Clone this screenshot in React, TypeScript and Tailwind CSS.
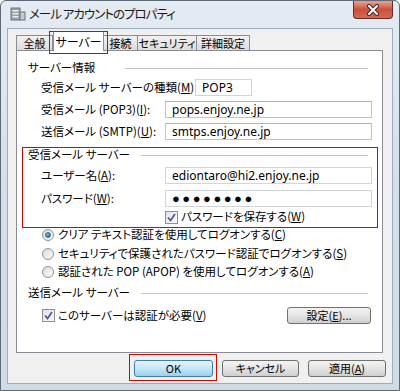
import React from "react";

const U = ({ c }: { c: string }) => <span className="underline">{c}</span>;

const Check = () => (
  <span className="relative inline-flex w-[13px] h-[13px] shrink-0 border border-[#8e8f8f] bg-gradient-to-br from-[#e3e3e3] to-[#fafafa] items-center justify-center">
    <svg width="11" height="11" viewBox="0 0 11 11">
      <path d="M2 5.5 L4.5 8.5 L9 2" fill="none" stroke="#4a5f97" strokeWidth="1.8" />
    </svg>
  </span>
);

const Radio = ({ on }: { on?: boolean }) => (
  <span className="inline-flex w-[12px] h-[12px] shrink-0 rounded-full border border-[#8e8f8f] bg-gradient-to-br from-[#dcdcdc] to-[#fbfbfb] items-center justify-center">
    {on && <span className="w-[6px] h-[6px] rounded-full bg-gradient-to-br from-[#8ad0f7] to-[#1d5b9c] border border-[#276aa3]" />}
  </span>
);

const Btn = ({ children, def, w }: { children: React.ReactNode; def?: boolean; w: string }) => (
  <div
    className={`${w} h-[17px] rounded-[3px] border flex items-center justify-center text-[11px] text-black ${
      def
        ? "border-[#3c7fb1] bg-gradient-to-b from-[#e5f4fc] via-[#c4e5f6] to-[#98d1ef]"
        : "border-[#707070] bg-gradient-to-b from-[#f4f4f4] via-[#e4e4e4] to-[#cfcfcf]"
    }`}
  >
    {children}
  </div>
);

const Heading = ({ text, w }: { text: string; w: string }) => (
  <div className="flex items-center h-[16px] pl-[11px] pr-[14px]">
    <span className={`${w} shrink-0 whitespace-nowrap`}>{text}</span>
    <div className="flex-1 border-t border-[#c5c5c5]" />
  </div>
);

const Input = ({ value, w, dim }: { value: React.ReactNode; w?: string; dim?: boolean }) => (
  <div
    className={`${w ?? "flex-1"} h-[17px] bg-white border ${
      dim ? "border-[#d0d5da]" : "border-[#b5c6d6] border-t-[#a2b3c4]"
    } flex items-center pl-[6px] font-['Noto_Sans',sans-serif] text-[12px] text-black whitespace-nowrap overflow-hidden`}
  >
    {value}
  </div>
);

const Tab = ({ label, w, sel }: { label: string; w: string; sel?: boolean }) =>
  sel ? (
    <div className={`${w} h-[20px] -mb-px relative z-10 bg-white border border-b-0 border-[#898c95] flex items-center justify-center text-[12px] whitespace-nowrap`}>
      {label}
    </div>
  ) : (
    <div className={`${w} h-[15px] bg-gradient-to-b from-[#f2f2f2] to-[#dcdcdc] border border-b-0 border-[#898c95] -ml-px first:ml-0 flex items-center justify-center text-[11px] whitespace-nowrap`}>
      {label}
    </div>
  );

export default function App() {
  return (
    <div className="w-[400px] h-[391px] relative overflow-hidden bg-gradient-to-b from-[#e4ebf2] via-[#d5dfe8] to-[#cfdae5] border border-[#5d6a78] rounded-t-[6px] font-['Noto_Sans_CJK_JP','Noto_Sans',sans-serif] [font-feature-settings:'palt'] text-black">
      {/* title bar */}
      <div className="h-[27px] flex items-start">
        <div className="ml-[9px] mt-[5px] w-[16px] h-[16px]">
          <svg width="16" height="16" viewBox="0 0 16 16">
            <rect x="1" y="2" width="9" height="12" fill="#9aa3ab" stroke="#6d757d" />
            <rect x="2.5" y="4" width="6" height="1.5" fill="#e8ecef" />
            <rect x="2.5" y="7" width="6" height="1.5" fill="#e8ecef" />
            <rect x="2.5" y="10" width="6" height="1.5" fill="#e8ecef" />
            <rect x="10" y="6" width="5" height="8" fill="#c4cbd1" stroke="#6d757d" />
          </svg>
        </div>
        <div className="ml-[3px] mt-[4px] text-[12.5px] leading-[18px] tracking-[-1px] text-[#1a1a1a]">
          メール アカウントのプロパティ
        </div>
        <div className="ml-auto mr-[6px] w-[40px] h-[18px] rounded-b-[4px] border border-t-0 border-[#6b2a22] bg-gradient-to-b from-[#e8a493] via-[#c9503d] to-[#d56a4f] flex items-center justify-center">
          <svg width="14" height="12" viewBox="0 0 14 12">
            <path d="M3 2 L11 10 M11 2 L3 10" stroke="#3d2a2a" strokeWidth="4" strokeLinecap="round" />
            <path d="M3 2 L11 10 M11 2 L3 10" stroke="#ffffff" strokeWidth="2" strokeLinecap="round" />
          </svg>
        </div>
      </div>

      {/* client area */}
      <div className="ml-[6px] w-[386px] h-[356px] bg-[#f0f0f0] border border-[#9aabbd] flex flex-col">
        {/* tabs */}
        <div className="pl-[8px] pt-[2px] h-[21px] flex items-end">
          <Tab label="全般" w="w-[37px]" />
          <Tab label="サーバー" w="w-[51px]" sel />
          <Tab label="接続" w="w-[35px]" />
          <Tab label="セキュリティ" w="w-[60px]" />
          <Tab label="詳細設定" w="w-[54px]" />
        </div>
        {/* panel */}
        <div className="ml-[8px] w-[367px] h-[303px] bg-white border border-[#898c95] flex flex-col text-[11.5px]">
          <div className="mt-[9px]">
            <Heading text="サーバー情報" w="w-[97px]" />
          </div>
          <div className="mt-[3px] h-[17px] flex items-center pl-[24px]">
            <span className="w-[154px] shrink-0 whitespace-nowrap">
              受信メール サーバーの種類(<U c="M" />)
            </span>
            <Input value="POP3" w="w-[57px]" dim />
          </div>
          <div className="mt-[5px] h-[17px] flex items-center pl-[24px] pr-[10px]">
            <span className="w-[124px] shrink-0 whitespace-nowrap">
              受信メール (POP3)(<U c="I" />):
            </span>
            <Input value="pops.enjoy.ne.jp" />
          </div>
          <div className="mt-[5px] h-[17px] flex items-center pl-[24px] pr-[10px]">
            <span className="w-[124px] shrink-0 whitespace-nowrap">
              送信メール (SMTP)(<U c="U" />):
            </span>
            <Input value="smtps.enjoy.ne.jp" />
          </div>

          <div className="mt-[7px]">
            <Heading text="受信メール サーバー" w="w-[113px]" />
          </div>
          <div className="mt-[4px] h-[17px] flex items-center pl-[24px] pr-[10px]">
            <span className="w-[124px] shrink-0 whitespace-nowrap">
              ユーザー名(<U c="A" />):
            </span>
            <Input value="ediontaro@hi2.enjoy.ne.jp" dim />
          </div>
          <div className="mt-[6px] h-[17px] flex items-center pl-[24px] pr-[10px]">
            <span className="w-[124px] shrink-0 whitespace-nowrap">
              パスワード(<U c="W" />):
            </span>
            <Input value={<span className="tracking-[2.5px] text-[13px]">●●●●●●●●</span>} dim />
          </div>
          <div className="mt-[2px] h-[16px] flex items-center pl-[148px] gap-[3px]">
            <Check />
            <span className="whitespace-nowrap">
              パスワードを保存する(<U c="W" />)
            </span>
          </div>

          <div className="mt-[2px] h-[16px] flex items-center pl-[25px] gap-[4px]">
            <Radio on />
            <span className="whitespace-nowrap">
              クリア テキスト認証を使用してログオンする(<U c="C" />)
            </span>
          </div>
          <div className="mt-[3px] h-[16px] flex items-center pl-[25px] gap-[4px]">
            <Radio />
            <span className="whitespace-nowrap">
              セキュリティで保護されたパスワード認証でログオンする(<U c="S" />)
            </span>
          </div>
          <div className="mt-[2px] h-[16px] flex items-center pl-[25px] gap-[4px]">
            <Radio />
            <span className="whitespace-nowrap">
              認証された POP (APOP) を使用してログオンする(<U c="A" />)
            </span>
          </div>

          <div className="mt-[5px]">
            <Heading text="送信メール サーバー" w="w-[113px]" />
          </div>
          <div className="mt-[6px] h-[17px] flex items-center pl-[25px] pr-[11px] gap-[3px]">
            <Check />
            <span className="whitespace-nowrap">
              このサーバーは認証が必要(<U c="V" />)
            </span>
            <div className="ml-auto">
              <Btn w="w-[84px]">
                設定(<U c="E" />)...
              </Btn>
            </div>
          </div>
        </div>
        {/* bottom buttons */}
        <div className="mt-[7px] flex justify-end gap-[9px] pr-[6px]">
          <Btn w="w-[79px]" def>
            OK
          </Btn>
          <Btn w="w-[77px]">キャンセル</Btn>
          <Btn w="w-[78px]">
            適用(<U c="A" />)
          </Btn>
        </div>
      </div>

      {/* red annotation boxes */}
      <div className="absolute left-[48px] top-[30px] w-[59px] h-[23px] border-[1.5px] border-[#e00000] z-20" />
      <div className="absolute left-[21px] top-[146px] w-[356px] h-[81px] border-[1.5px] border-[#e00000] z-20" />
      <div className="absolute left-[128px] top-[353px] w-[88px] h-[27px] border-[1.5px] border-[#e00000] z-20" />
    </div>
  );
}
